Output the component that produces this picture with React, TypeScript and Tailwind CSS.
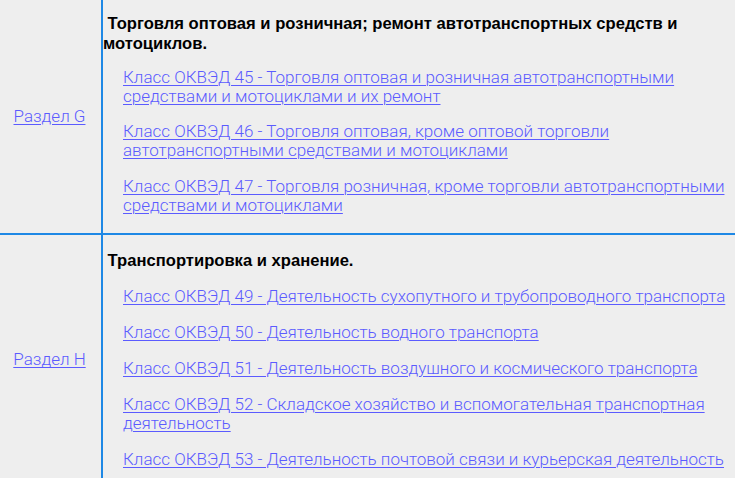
import React from 'react';

interface Section {
  label: string;
  title: string[];
  padTop: string;
  titleGap: string;
  linkGap: string;
  links: string[][];
}

const SECTIONS: Section[] = [
  {
    label: 'Раздел G',
    title: ['\u00a0Торговля оптовая и розничная; ремонт автотранспортных средств и', 'мотоциклов.'],
    padTop: 'pt-[14px] pb-[18px]',
    titleGap: 'mb-[13.5px]',
    linkGap: 'gap-[16.5px]',
    links: [
      ['Класс ОКВЭД 45 - Торговля оптовая и розничная автотранспортными', 'средствами и мотоциклами и их ремонт'],
      ['Класс ОКВЭД 46 - Торговля оптовая, кроме оптовой торговли', 'автотранспортными средствами и мотоциклами'],
      ['Класс ОКВЭД 47 - Торговля розничная, кроме торговли автотранспортными', 'средствами и мотоциклами'],
    ],
  },
  {
    label: 'Раздел H',
    title: ['\u00a0Транспортировка и хранение.'],
    padTop: 'pt-[16px] pb-[17px]',
    titleGap: 'mb-[16px]',
    linkGap: 'gap-[17px]',
    links: [
      ['Класс ОКВЭД 49 - Деятельность сухопутного и трубопроводного транспорта'],
      ['Класс ОКВЭД 50 - Деятельность водного транспорта'],
      ['Класс ОКВЭД 51 - Деятельность воздушного и космического транспорта'],
      ['Класс ОКВЭД 52 - Складское хозяйство и вспомогательная транспортная', 'деятельность'],
      ['Класс ОКВЭД 53 - Деятельность почтовой связи и курьерская деятельность'],
    ],
  },
];

function LinkText({ lines }: { lines: string[] }) {
  return (
    <a href="#" className="text-[#5b5bff] underline underline-offset-[2px] decoration-1">
      {lines.map((line, i) => (
        <React.Fragment key={i}>
          {i > 0 && <br />}
          <span className="whitespace-nowrap">{line}</span>
        </React.Fragment>
      ))}
    </a>
  );
}

export default function App() {
  return (
    <div className="h-[478px] w-[735px] overflow-hidden bg-[#eeeeee]">
      {SECTIONS.map((s, idx) => (
        <div
          key={s.label}
          className={`flex ${idx < SECTIONS.length - 1 ? 'border-b-2 border-[#1e88e5]' : ''}`}
        >
          <div className="flex w-[103px] shrink-0 items-center justify-center border-r-2 border-[#1e88e5] pr-[2px]">
            <a
              href="#"
              className="font-['Roboto',sans-serif] text-[17px] font-light text-[#5b5bff] underline underline-offset-[2px] decoration-1"
            >
              {s.label}
            </a>
          </div>
          <div className={`flex-1 ${s.padTop}`}>
            <h2
              className={`font-['Liberation_Sans',Arial,sans-serif] text-[16.6px] font-bold leading-[20px] text-black ${s.titleGap}`}
            >
              {s.title.map((line, i) => (
                <React.Fragment key={i}>
                  {i > 0 && <br />}
                  <span className="whitespace-nowrap">{line}</span>
                </React.Fragment>
              ))}
            </h2>
            <div className={`flex flex-col pl-[20px] font-['Roboto',sans-serif] text-[17px] font-light leading-[19px] ${s.linkGap}`}>
              {s.links.map((lines, i) => (
                <div key={i}>
                  <LinkText lines={lines} />
                </div>
              ))}
            </div>
          </div>
        </div>
      ))}
    </div>
  );
}
